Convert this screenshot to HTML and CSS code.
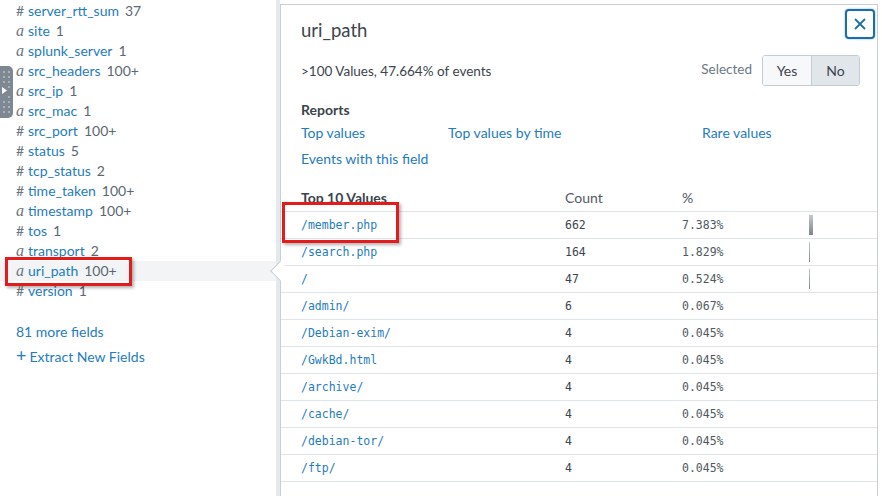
FILE: index.html
```html
<!DOCTYPE html>
<html>
<head>
<meta charset="utf-8">
<link rel="stylesheet" href="styles.css">
</head>
<body>
<div class="page">
  <aside class="sidebar">
    <ul class="fields">
      <li class="field"><span class="type num">#</span><span class="name">server_rtt_sum</span><span class="count">37</span></li>
      <li class="field"><span class="type str">a</span><span class="name">site</span><span class="count">1</span></li>
      <li class="field"><span class="type str">a</span><span class="name">splunk_server</span><span class="count">1</span></li>
      <li class="field"><span class="type str">a</span><span class="name">src_headers</span><span class="count">100+</span></li>
      <li class="field"><span class="type str">a</span><span class="name">src_ip</span><span class="count">1</span></li>
      <li class="field"><span class="type str">a</span><span class="name">src_mac</span><span class="count">1</span></li>
      <li class="field"><span class="type num">#</span><span class="name">src_port</span><span class="count">100+</span></li>
      <li class="field"><span class="type num">#</span><span class="name">status</span><span class="count">5</span></li>
      <li class="field"><span class="type num">#</span><span class="name">tcp_status</span><span class="count">2</span></li>
      <li class="field"><span class="type num">#</span><span class="name">time_taken</span><span class="count">100+</span></li>
      <li class="field"><span class="type str">a</span><span class="name">timestamp</span><span class="count">100+</span></li>
      <li class="field"><span class="type num">#</span><span class="name">tos</span><span class="count">1</span></li>
      <li class="field"><span class="type str">a</span><span class="name">transport</span><span class="count">2</span></li>
      <li class="field active"><span class="type str">a</span><span class="name">uri_path</span><span class="count">100+</span></li>
      <li class="field"><span class="type num">#</span><span class="name">version</span><span class="count">1</span></li>
    </ul>
    <div class="more">81 more fields</div>
    <div class="extract"><span class="plus">+</span>Extract New Fields</div>
  </aside>
  <div class="gutter"></div>
  <section class="popup">
    <span class="arrow"></span>
    <h1 class="title">uri_path</h1>
    <button class="close" aria-label="Close">
      <svg width="12" height="12" viewBox="0 0 12 12"><path d="M1.5 1.5 L10.5 10.5 M10.5 1.5 L1.5 10.5" stroke="#1a6fa8" stroke-width="1.8" fill="none" stroke-linecap="round"/></svg>
    </button>
    <div class="summary">
      <span class="stats">&gt;100 Values, 47.664% of events</span>
      <div class="selected">
        <span class="sel-label">Selected</span>
        <div class="toggle">
          <span class="opt">Yes</span>
          <span class="opt on">No</span>
        </div>
      </div>
    </div>
    <h2 class="reports-title">Reports</h2>
    <div class="reports">
      <a class="link">Top values</a>
      <a class="link">Top values by time</a>
      <a class="link">Rare values</a>
      <a class="link">Events with this field</a>
    </div>
    <table class="values">
      <colgroup>
        <col class="c-val"><col class="c-count"><col class="c-pct"><col class="c-bar">
      </colgroup>
      <thead>
        <tr><th class="th-val">Top 10 Values</th><th>Count</th><th>%</th><th></th></tr>
      </thead>
      <tbody>
        <tr><td class="val">/member.php</td><td class="cnt">662</td><td class="pct">7.383%</td><td><div class="bar" style="width:4px"></div></td></tr>
        <tr><td class="val">/search.php</td><td class="cnt">164</td><td class="pct">1.829%</td><td><div class="bar" style="width:1px"></div></td></tr>
        <tr><td class="val">/</td><td class="cnt">47</td><td class="pct">0.524%</td><td><div class="bar" style="width:1px"></div></td></tr>
        <tr><td class="val">/admin/</td><td class="cnt">6</td><td class="pct">0.067%</td><td></td></tr>
        <tr><td class="val">/Debian-exim/</td><td class="cnt">4</td><td class="pct">0.045%</td><td></td></tr>
        <tr><td class="val">/GwkBd.html</td><td class="cnt">4</td><td class="pct">0.045%</td><td></td></tr>
        <tr><td class="val">/archive/</td><td class="cnt">4</td><td class="pct">0.045%</td><td></td></tr>
        <tr><td class="val">/cache/</td><td class="cnt">4</td><td class="pct">0.045%</td><td></td></tr>
        <tr><td class="val">/debian-tor/</td><td class="cnt">4</td><td class="pct">0.045%</td><td></td></tr>
        <tr><td class="val">/ftp/</td><td class="cnt">4</td><td class="pct">0.045%</td><td></td></tr>
      </tbody>
    </table>
  </section>

  <div class="handle">
    <svg width="13" height="52" viewBox="0 0 13 52">
      <g fill="#a9b2bb">
        <rect x="3" y="5" width="2" height="2"/><rect x="8" y="5" width="2" height="2"/>
        <rect x="3" y="10" width="2" height="2"/><rect x="8" y="10" width="2" height="2"/>
        <rect x="3" y="15" width="2" height="2"/><rect x="8" y="15" width="2" height="2"/>
        <rect x="8" y="20" width="2" height="2"/>
        <rect x="8" y="30" width="2" height="2"/>
        <rect x="3" y="35" width="2" height="2"/><rect x="8" y="35" width="2" height="2"/>
        <rect x="3" y="40" width="2" height="2"/><rect x="8" y="40" width="2" height="2"/>
        <rect x="3" y="45" width="2" height="2"/><rect x="8" y="45" width="2" height="2"/>
      </g>
      <path d="M2 21 L7 24.5 L2 28 Z" fill="#ffffff"/>
    </svg>
  </div>
  <div class="annot annot-field"></div>
  <div class="annot annot-value"></div>
</div>
</body>
</html>
```

FILE: styles.css
```css
* { box-sizing: border-box; }
html, body { margin: 0; padding: 0; }
body {
  width: 882px;
  height: 496px;
  overflow: hidden;
  background: #ffffff;
  font-family: "Lato", "Liberation Sans", sans-serif;
  font-size: 14px;
  color: #3c444d;
}
.page {
  position: relative;
  display: flex;
  height: 496px;
  overflow: hidden;
}

/* Sidebar */
.sidebar {
  width: 276px;
  flex: none;
  padding-top: 1px;
}
.fields { list-style: none; margin: 0; padding: 0; }
.field {
  height: 20px;
  line-height: 20px;
  padding-left: 16px;
  display: flex;
  align-items: baseline;
  white-space: nowrap;
}
.field.active { background: #f2f4f5; }
.type {
  width: 12px;
  color: #6b7580;
}
.type.num { font-size: 14px; }
.type.str {
  font-family: "Liberation Serif", "DejaVu Serif", serif;
  font-style: italic;
  font-size: 16px;
}
.name { color: #1f7cc0; }
.count { color: #5c6773; margin-left: 6px; }
.more, .extract {
  padding-left: 16px;
  height: 20px;
  line-height: 20px;
  color: #1f7cc0;
}
.more { margin-top: 21px; }
.extract { margin-top: 3px; }
.plus { font-size: 18px; margin-right: 3px; }

.gutter {
  width: 4px;
  flex: none;
  background: #e6e9ec;
}

/* Popup */
.popup {
  position: relative;
  flex: 1;
  margin: 4px 4px 0 0;
  border: 1px solid #c8cfd6;
  border-bottom: none;
  background: #ffffff;
  padding: 0 17px 0 20px;
}
.arrow {
  position: absolute;
  left: -8px;
  top: 259px;
  width: 14px;
  height: 14px;
  background: #ffffff;
  border-left: 1px solid #c8cfd6;
  border-bottom: 1px solid #c8cfd6;
  transform: rotate(45deg);
}
.title {
  margin: 13px 0 0;
  font-size: 18.5px;
  line-height: 24px;
  font-weight: 400;
  color: #3c444d;
}
.close {
  position: absolute;
  top: 4px;
  right: 2px;
  width: 30px;
  height: 30px;
  padding: 0;
  border: 2px solid #1a6fa8;
  border-radius: 4px;
  background: #ffffff;
  box-shadow: 0 0 2px rgba(26, 111, 168, 0.6);
  display: flex;
  align-items: center;
  justify-content: center;
}
.summary {
  margin-top: 13px;
  display: flex;
  align-items: center;
  justify-content: space-between;
  height: 31px;
}
.stats { font-size: 13.5px; color: #3c444d; }
.selected { display: flex; align-items: center; }
.sel-label {
  color: #6b7785;
  font-size: 13.5px;
  margin-right: 10px;
  position: relative;
  top: -2px;
}
.toggle {
  display: flex;
  border: 1px solid #c3cbd4;
  border-radius: 3px;
  overflow: hidden;
  height: 31px;
}
.opt {
  width: 48px;
  display: flex;
  align-items: center;
  justify-content: center;
  background: #f7f8fa;
  color: #3c444d;
  font-size: 14px;
}
.opt.on {
  background: #e1e6eb;
  border-left: 1px solid #c3cbd4;
}
.reports-title {
  margin: 14px 0 0;
  font-size: 14px;
  line-height: 20px;
  font-weight: 700;
  color: #3c444d;
}
.reports {
  margin-top: 3px;
  display: grid;
  grid-template-columns: 147px 254px 1fr;
  row-gap: 6px;
  line-height: 20px;
}
.link { color: #1f7cc0; }

.values {
  margin: 15px -17px 0 -20px;
  width: calc(100% + 37px);
  border-collapse: collapse;
  table-layout: fixed;
}
.c-val { width: 264px; }
.c-count { width: 117px; }
.c-pct { width: 127px; }
.values th {
  height: 27px;
  text-align: left;
  padding: 0 0 0 20px;
  font-weight: 400;
  color: #4f5962;
  border-bottom: 1px solid #dfe4e8;
  vertical-align: middle;
  font-size: 14px;
}
.values th.th-val { font-weight: 700; color: #3c444d; }
.values td {
  height: 27px;
  padding: 1px 0 0 20px;
  border-bottom: 1px solid #dfe4e8;
  vertical-align: middle;
  font-family: "DejaVu Sans Mono", "Liberation Mono", monospace;
  font-size: 11.5px;
}
.val { color: #1f7cc0; }
.cnt { color: #3c444d; }
.pct { color: #4f5962; }
.bar {
  height: 20px;
  background: linear-gradient(to bottom, #c3c9cf, #7c858e);
}

/* Drag handle */
.handle {
  position: absolute;
  left: 0;
  top: 66px;
  width: 13px;
  height: 52px;
  background: #7d8893;
  border-radius: 0 5px 5px 0;
}
.handle svg { display: block; }

/* Annotation boxes */
.annot {
  position: absolute;
  border: 3px solid #e31b1b;
  box-shadow: 2px 2px 3px rgba(0, 0, 0, 0.3);
  pointer-events: none;
}
.annot-field { left: 5px; top: 257px; width: 127px; height: 29px; }
.annot-value { left: 282px; top: 202px; width: 117px; height: 41px; }
```
